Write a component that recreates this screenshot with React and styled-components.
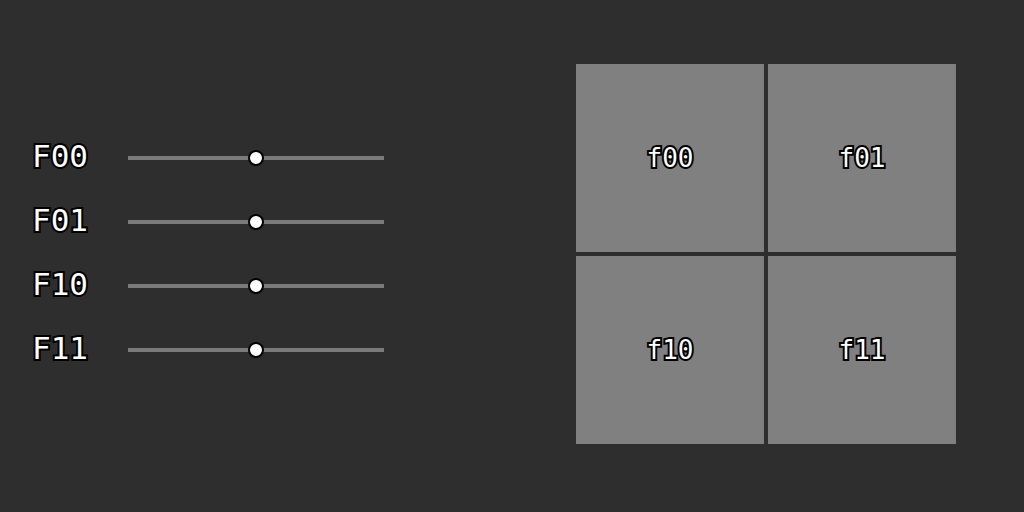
import React from "react";
import styled, { createGlobalStyle } from "styled-components";

const Global = createGlobalStyle`
  html, body { margin: 0; padding: 0; background: #2e2e2e; }
  body { font-family: "DejaVu Sans Mono", monospace; }
`;

// white glyphs with a black rim drawn behind the fill
const outlined = `
  color: #fff;
  -webkit-text-stroke: 4px #000;
  paint-order: stroke fill;
`;

const Page = styled.div`
  width: 1024px;
  height: 512px;
  display: flex;
  align-items: flex-start;
  box-sizing: border-box;
  padding-top: 64px;
`;

const Controls = styled.div`
  display: flex;
  flex-direction: column;
  margin-top: 62px;
  padding-left: 32px;
  width: 576px;
  box-sizing: border-box;
`;

const Row = styled.div`
  display: flex;
  align-items: center;
  height: 64px;
`;

const Label = styled.span`
  width: 96px;
  padding-bottom: 4px;
  font-size: 31px;
  line-height: 1;
  ${outlined}
`;

const Track = styled.div`
  position: relative;
  width: 256px;
  height: 4px;
  background: #7a7a7a;
`;

const Knob = styled.div`
  position: absolute;
  top: 50%;
  width: 12px;
  height: 12px;
  border: 2px solid #000;
  border-radius: 50%;
  background: #fff;
  transform: translate(-50%, -50%);
`;

const Grid = styled.div`
  display: grid;
  grid-template-columns: 188px 188px;
  grid-auto-rows: 188px;
  gap: 4px;
`;

const Cell = styled.div`
  background: #808080;
  display: flex;
  align-items: center;
  justify-content: center;
  font-size: 26px;
  ${outlined}
`;

const sliders = [
  { name: "F00", value: 0.5 },
  { name: "F01", value: 0.5 },
  { name: "F10", value: 0.5 },
  { name: "F11", value: 0.5 },
];

export default function App() {
  return (
    <>
      <Global />
      <Page>
        <Controls>
          {sliders.map((s) => (
            <Row key={s.name}>
              <Label>{s.name}</Label>
              <Track>
                <Knob style={{ left: `${s.value * 100}%` }} />
              </Track>
            </Row>
          ))}
        </Controls>
        <Grid>
          {["f00", "f01", "f10", "f11"].map((c) => (
            <Cell key={c}>{c}</Cell>
          ))}
        </Grid>
      </Page>
    </>
  );
}
